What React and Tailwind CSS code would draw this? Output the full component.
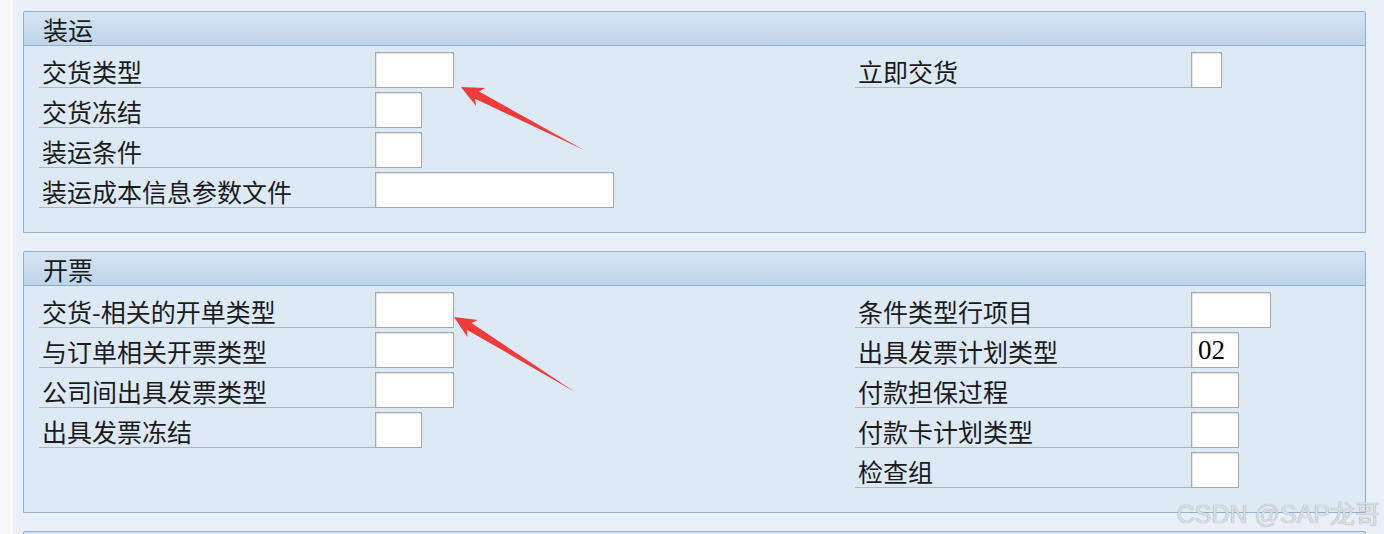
const shipping = {
  title: '装运',
  left: [
    { label: '交货类型', w: 'w-[79px]' },
    { label: '交货冻结', w: 'w-[47px]' },
    { label: '装运条件', w: 'w-[47px]' },
    { label: '装运成本信息参数文件', w: 'w-[239px]' }
  ],
  right: [{ label: '立即交货', w: 'w-[31px]' }]
};

const billing = {
  title: '开票',
  left: [
    { label: '交货-相关的开单类型', w: 'w-[79px]' },
    { label: '与订单相关开票类型', w: 'w-[79px]' },
    { label: '公司间出具发票类型', w: 'w-[79px]' },
    { label: '出具发票冻结', w: 'w-[47px]' }
  ],
  right: [
    { label: '条件类型行项目', w: 'w-[80px]' },
    { label: '出具发票计划类型', w: 'w-[48px]', value: '02' },
    { label: '付款担保过程', w: 'w-[48px]' },
    { label: '付款卡计划类型', w: 'w-[48px]' },
    { label: '检查组', w: 'w-[48px]' }
  ]
};

function Field({ label, w, value }) {
  return (
    <div className="flex h-[40px] items-end">
      <div className="w-[336px] border-b border-[#b3b6ba] pl-[3px] text-[25px] leading-[32px] text-[#1b1b1b]">
        {label}
      </div>
      <div
        className={`${w} flex h-[36px] items-center border border-[#a9a9a9] bg-white pl-[6px] font-['Liberation_Serif',serif] text-[27px] text-black shadow-[inset_1px_1px_1px_#e4e4e4]`}
      >
        {value}
      </div>
    </div>
  );
}

function Panel({ data }) {
  return (
    <section className="rounded-t-[2px] border border-[#92b0cf] bg-[#dde9f4]">
      <div className="h-[34px] border-b border-[#8eadcc] bg-gradient-to-b from-[#d4e3f1] to-[#bfd5ea] pl-[19px] text-[25px] leading-[34px] text-[#1b1b1b]">
        {data.title}
      </div>
      <div className="flex pt-[2px] pb-[24px] pl-[15px]">
        <div className="flex w-[816px] flex-col">
          {data.left.map((f) => (
            <Field key={f.label} {...f} />
          ))}
        </div>
        <div className="flex flex-col">
          {data.right.map((f) => (
            <Field key={f.label} {...f} />
          ))}
        </div>
      </div>
    </section>
  );
}

export default function App() {
  return (
    <div className="relative flex h-[534px] w-[1384px] overflow-hidden font-['Noto_Sans_CJK_SC',sans-serif]">
      <div className="w-[13px] shrink-0 bg-[#f7f9fb]" />
      <div className="flex flex-1 flex-col gap-[18px] bg-[#e8eff7] pt-[11px] pl-[10px] pr-[18px]">
        <Panel data={shipping} />
        <Panel data={billing} />
        <section className="h-[40px] shrink-0 rounded-t-[2px] border border-[#92b0cf] bg-gradient-to-b from-[#d4e3f1] to-[#bfd5ea]" />
      </div>

      <svg className="pointer-events-none absolute inset-0" width="1384" height="534">
        <polygon
          points="461,87 485,88 479,91.6 584,150 475,98.8 476,106"
          fill="#f03b3b"
        />
        <polygon
          points="454,317 478,320 471.4,323.1 575,392 467.2,329.9 467.4,337.1"
          fill="#f03b3b"
        />
      </svg>

      <div className="pointer-events-none absolute right-[4px] bottom-[7px] font-['Liberation_Sans','Noto_Sans_CJK_SC',sans-serif] text-[25px] leading-none text-[#dadee3] [text-shadow:0_0_1px_#8f959c]">
        CSDN @SAP龙哥
      </div>
    </div>
  );
}
